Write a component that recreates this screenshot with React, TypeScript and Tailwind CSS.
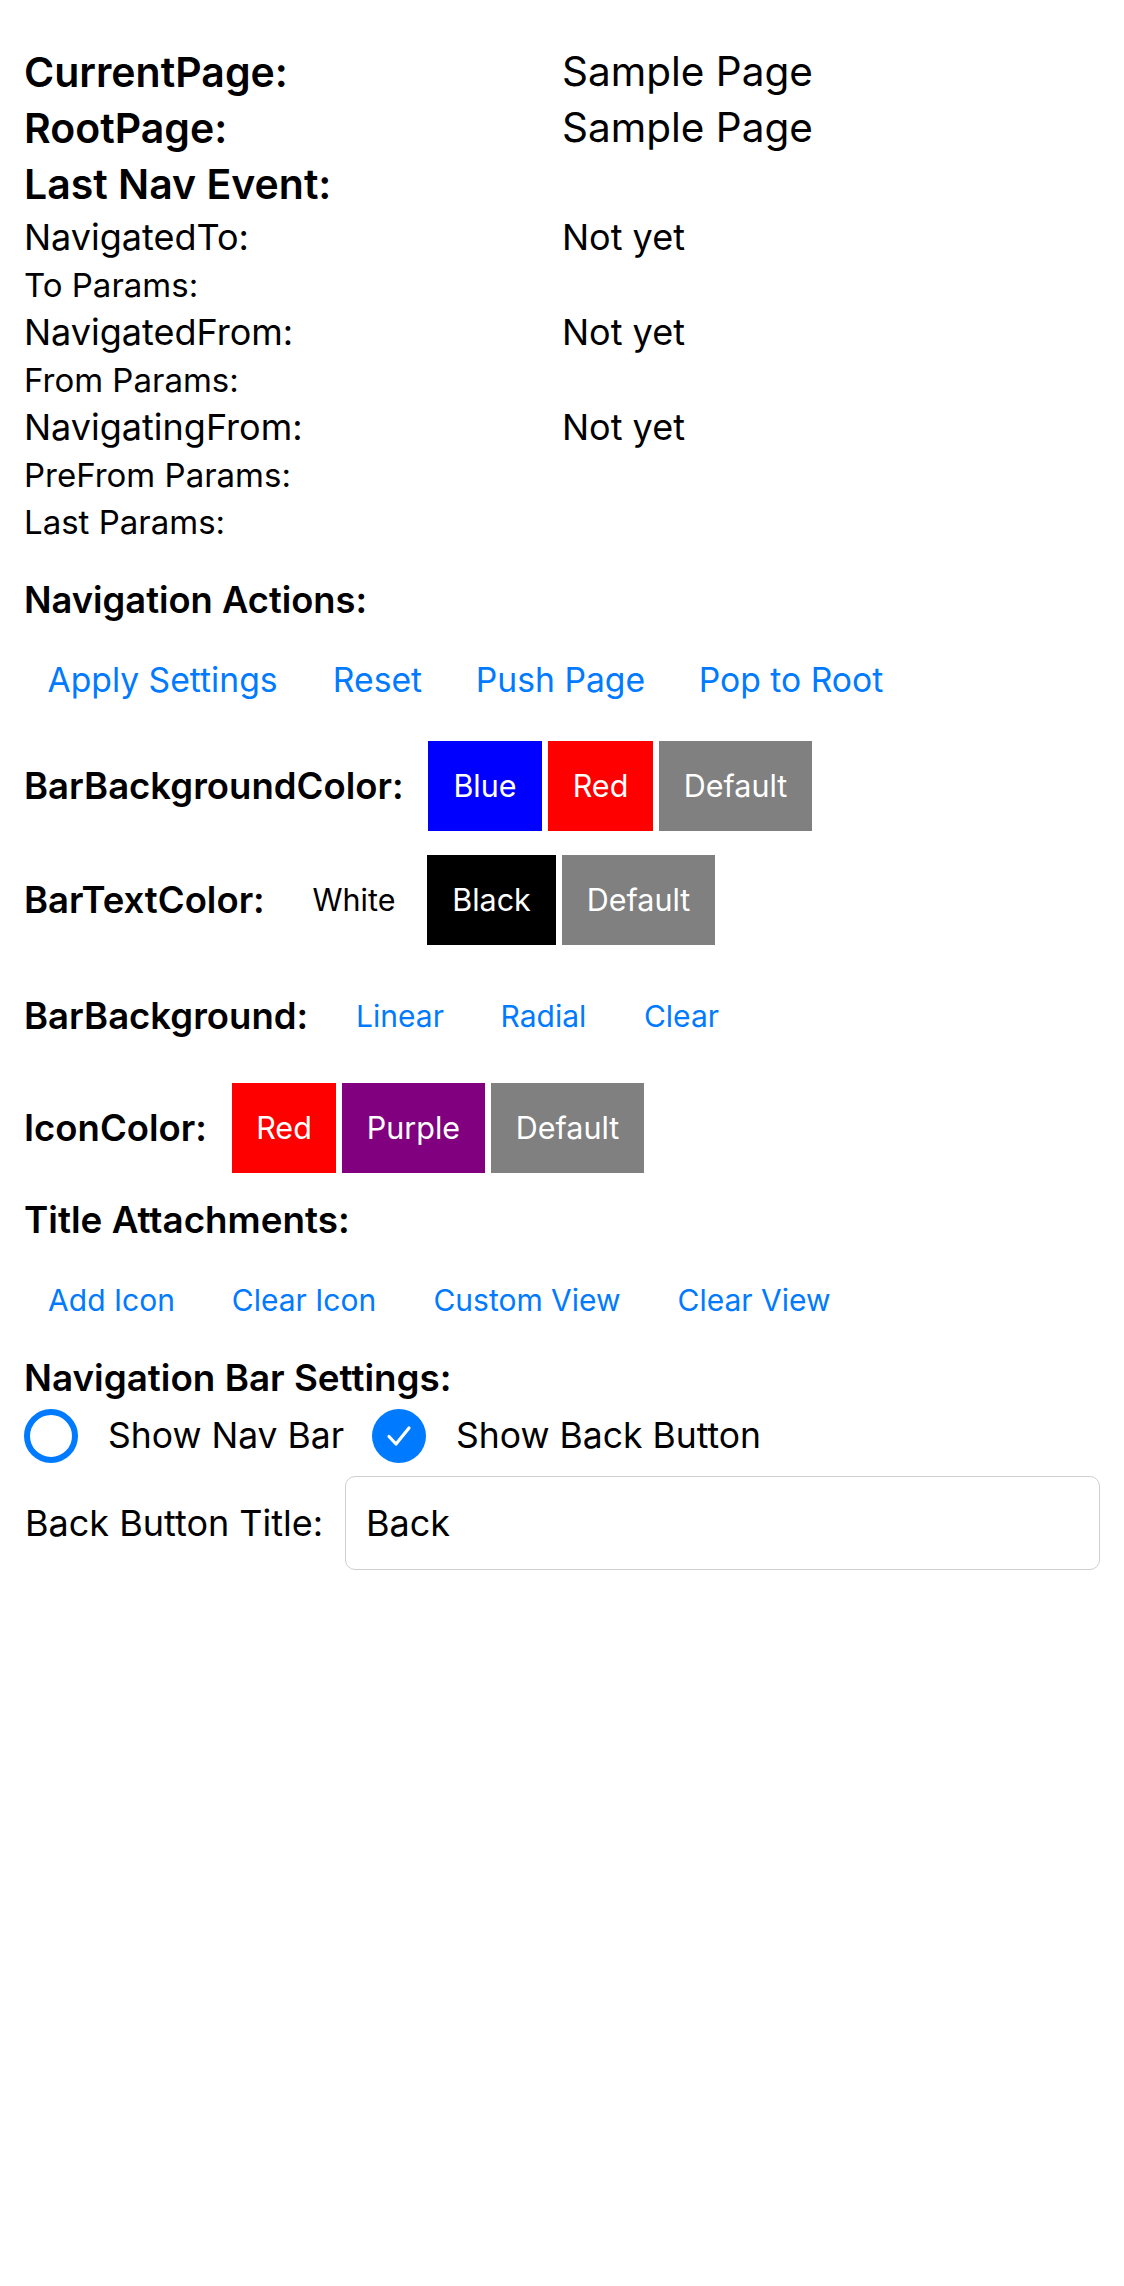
import React from "react";

const Check = ({ checked }: { checked: boolean }) =>
  checked ? (
    <svg width="54" height="54" viewBox="0 0 54 54">
      <circle cx="27" cy="27" r="27" fill="#007AFF" />
      <path d="M17 27.5 L24 35 L37 19" fill="none" stroke="#fff" strokeWidth="3.2" strokeLinecap="round" strokeLinejoin="round" />
    </svg>
  ) : (
    <svg width="54" height="54" viewBox="0 0 54 54">
      <circle cx="27" cy="27" r="24" fill="none" stroke="#007AFF" strokeWidth="6" />
    </svg>
  );

const TextBtn = ({ label, w, size = "text-[30px]" }: { label: string; w: string; size?: string }) => (
  <div className={`${w} shrink-0 h-[60px] flex items-center justify-center text-[#007AFF] ${size} whitespace-nowrap`}>{label}</div>
);

const ColorBtn = ({ label, w, bg }: { label: string; w: string; bg: string }) => (
  <div className={`${w} ${bg} shrink-0 h-[90px] flex items-center justify-center text-white text-[30.5px] whitespace-nowrap`}>{label}</div>
);

export default function App() {
  return (
    <div className="w-[1124px] min-h-[2286px] bg-white text-black font-['Inter',sans-serif] pl-6 pr-6 pt-[44px]">
      <div className="grid grid-cols-2">
        <div className="h-[56px] leading-[56px] text-[41px] font-semibold whitespace-nowrap">CurrentPage:</div>
        <div className="h-[56px] leading-[56px] text-[40.5px] whitespace-nowrap">Sample Page</div>
        <div className="h-[56px] leading-[56px] text-[41px] font-semibold whitespace-nowrap">RootPage:</div>
        <div className="h-[56px] leading-[56px] text-[40.5px] whitespace-nowrap">Sample Page</div>
        <div className="h-[58px] leading-[56px] text-[41px] font-semibold whitespace-nowrap col-span-2">Last Nav Event:</div>

        <div className="h-[47.5px] leading-[47.5px] text-[36px] whitespace-nowrap">NavigatedTo:</div>
        <div className="h-[47.5px] leading-[47.5px] text-[36px] whitespace-nowrap">Not yet</div>
        <div className="h-[47.5px] leading-[47.5px] text-[33px] whitespace-nowrap col-span-2">To Params:</div>
        <div className="h-[47.5px] leading-[47.5px] text-[36px] whitespace-nowrap">NavigatedFrom:</div>
        <div className="h-[47.5px] leading-[47.5px] text-[36px] whitespace-nowrap">Not yet</div>
        <div className="h-[47.5px] leading-[47.5px] text-[33px] whitespace-nowrap col-span-2">From Params:</div>
        <div className="h-[47.5px] leading-[47.5px] text-[36px] whitespace-nowrap">NavigatingFrom:</div>
        <div className="h-[47.5px] leading-[47.5px] text-[36px] whitespace-nowrap">Not yet</div>
        <div className="h-[47.5px] leading-[47.5px] text-[33px] whitespace-nowrap col-span-2">PreFrom Params:</div>
        <div className="h-[47.5px] leading-[47.5px] text-[33px] whitespace-nowrap col-span-2">Last Params:</div>
      </div>

      <div className="mt-[29.5px] h-[48px] leading-[48px] text-[36.3px] font-semibold whitespace-nowrap">Navigation Actions:</div>

      <div className="mt-[26px] flex gap-[9px]">
        <TextBtn label="Apply Settings" w="w-[277px]" size="text-[33.7px]" />
        <TextBtn label="Reset" w="w-[135px]" size="text-[33.7px]" />
        <TextBtn label="Push Page" w="w-[213px]" size="text-[33.7px]" />
        <TextBtn label="Pop to Root" w="w-[230px]" size="text-[33.7px]" />
      </div>

      <div className="mt-[31px] flex items-center h-[90px]">
        <div className="w-[404px] shrink-0 text-[36.5px] font-semibold whitespace-nowrap">BarBackgroundColor:</div>
        <div className="flex gap-[6px]">
          <ColorBtn label="Blue" w="w-[114px]" bg="bg-[#0000FF]" />
          <ColorBtn label="Red" w="w-[105px]" bg="bg-[#FF0000]" />
          <ColorBtn label="Default" w="w-[153px]" bg="bg-[#808080]" />
        </div>
      </div>

      <div className="mt-[24px] flex items-center h-[90px]">
        <div className="w-[262px] shrink-0 text-[36.5px] font-semibold whitespace-nowrap">BarTextColor:</div>
        <div className="flex gap-[5px]">
          <div className="w-[136px] shrink-0 h-[90px] flex items-center justify-center text-[30.5px] text-black">White</div>
          <div className="flex gap-[6px]">
            <ColorBtn label="Black" w="w-[129px]" bg="bg-black" />
            <ColorBtn label="Default" w="w-[153px]" bg="bg-[#808080]" />
          </div>
        </div>
      </div>

      <div className="mt-[41px] flex items-center h-[60px]">
        <div className="w-[309px] shrink-0 text-[36.5px] font-semibold whitespace-nowrap">BarBackground:</div>
        <div className="flex gap-[9px]">
          <TextBtn label="Linear" w="w-[134px]" />
          <TextBtn label="Radial" w="w-[135px]" />
          <TextBtn label="Clear" w="w-[123px]" />
        </div>
      </div>

      <div className="mt-[37px] flex items-center h-[90px]">
        <div className="w-[208px] shrink-0 text-[36.5px] font-semibold whitespace-nowrap">IconColor:</div>
        <div className="flex gap-[6px]">
          <ColorBtn label="Red" w="w-[104px]" bg="bg-[#FF0000]" />
          <ColorBtn label="Purple" w="w-[143px]" bg="bg-[#800080]" />
          <ColorBtn label="Default" w="w-[153px]" bg="bg-[#808080]" />
        </div>
      </div>

      <div className="mt-[23px] h-[48px] leading-[48px] text-[36.8px] font-semibold whitespace-nowrap">Title Attachments:</div>

      <div className="mt-[26px] flex gap-[9px]">
        <TextBtn label="Add Icon" w="w-[175px]" />
        <TextBtn label="Clear Icon" w="w-[192px]" />
        <TextBtn label="Custom View" w="w-[236px]" />
        <TextBtn label="Clear View" w="w-[200px]" />
      </div>

      <div className="mt-[24px] h-[48px] leading-[48px] text-[36.8px] font-semibold whitespace-nowrap">Navigation Bar Settings:</div>

      <div className="mt-[7px] flex items-center h-[54px]">
        <Check checked={false} />
        <div className="ml-[30px] text-[35.5px] whitespace-nowrap">Show Nav Bar</div>
        <div className="ml-[28px]">
          <Check checked={true} />
        </div>
        <div className="ml-[30px] text-[35.5px] whitespace-nowrap">Show Back Button</div>
      </div>

      <div className="mt-[13px] flex items-center h-[94px]">
        <div className="w-[321px] shrink-0 pl-[1px] text-[36px] whitespace-nowrap">Back Button Title:</div>
        <div className="w-[755px] h-[94px] rounded-[10px] border-[1.5px] border-[#cfcfcf] flex items-center pl-[20px] text-[36px]">Back</div>
      </div>
    </div>
  );
}
